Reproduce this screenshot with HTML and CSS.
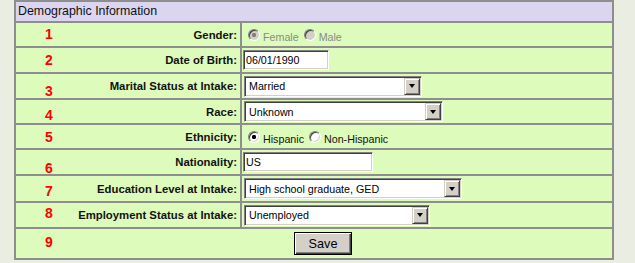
FILE: index.html
```html
<!DOCTYPE html>
<html>
<head>
<meta charset="utf-8">
<title>Demographic Information</title>
<link rel="stylesheet" href="styles.css">
</head>
<body>
<div class="form">
  <div class="hdr">Demographic Information</div>

  <div class="row h23">
    <div class="lbl">Gender:</div>
    <div class="fld">
      <label class="opt off"><input type="radio" name="gender" checked disabled><span>Female</span></label>
      <label class="opt off"><input type="radio" name="gender" disabled><span>Male</span></label>
    </div>
    <span class="num n1">1</span>
  </div>

  <div class="row h24">
    <div class="lbl">Date of Birth:</div>
    <div class="fld"><input class="txt w-dob" type="text" value="06/01/1990"></div>
    <span class="num n2">2</span>
  </div>

  <div class="row h24">
    <div class="lbl">Marital Status at Intake:</div>
    <div class="fld">
      <span class="sel w-marital"><select><option>Married</option></select><span class="arr"><i></i></span></span>
    </div>
    <span class="num n3">3</span>
  </div>

  <div class="row h23">
    <div class="lbl">Race:</div>
    <div class="fld">
      <span class="sel w-race"><select><option>Unknown</option></select><span class="arr"><i></i></span></span>
    </div>
    <span class="num n4">4</span>
  </div>

  <div class="row h23">
    <div class="lbl">Ethnicity:</div>
    <div class="fld">
      <label class="opt"><input type="radio" name="eth" checked><span>Hispanic</span></label>
      <label class="opt"><input type="radio" name="eth"><span>Non-Hispanic</span></label>
    </div>
    <span class="num n5">5</span>
  </div>

  <div class="row h24">
    <div class="lbl">Nationality:</div>
    <div class="fld"><input class="txt w-nat" type="text" value="US"></div>
    <span class="num n6">6</span>
  </div>

  <div class="row h25">
    <div class="lbl">Education Level at Intake:</div>
    <div class="fld">
      <span class="sel w-edu"><select><option>High school graduate, GED</option></select><span class="arr"><i></i></span></span>
    </div>
    <span class="num n7">7</span>
  </div>

  <div class="row h24">
    <div class="lbl">Employment Status at Intake:</div>
    <div class="fld">
      <span class="sel w-emp"><select><option>Unemployed</option></select><span class="arr"><i></i></span></span>
    </div>
    <span class="num n8">8</span>
  </div>

  <div class="row last h29">
    <div class="act"><button type="button" class="btn">Save</button></div>
    <span class="num n9">9</span>
  </div>
</div>
</body>
</html>
```

FILE: styles.css
```css
html, body {
  margin: 0;
  padding: 0;
  background: #eaeee2;
}

body {
  font-family: "Liberation Sans", Arial, sans-serif;
  color: #111;
}

.form {
  margin-left: 14px;
  width: 596px;
  border: 2px solid #8e8e8e;
  background: #ddfbbb;
}

.hdr {
  height: 19px;
  background: #dcd5ef;
  font-size: 12.4px;
  line-height: 19px;
  padding-left: 2px;
  color: #111;
}

.row {
  position: relative;
  display: grid;
  grid-template-columns: 226px 1fr;
  border-top: 2px solid #8e8e8e;
}

.h23 { height: 23px; }
.h24 { height: 24px; }
.h25 { height: 25px; }
.h29 { height: 29px; }

.lbl {
  display: flex;
  align-items: center;
  justify-content: flex-end;
  border-right: 2px solid #8e8e8e;
  padding-right: 3px;
  font-weight: bold;
  font-size: 11.35px;
  color: #111;
}

.fld {
  display: flex;
  align-items: center;
  padding-left: 1px;
}

.row.last {
  grid-template-columns: 1fr;
}

.act {
  display: flex;
  align-items: center;
  justify-content: center;
  padding-left: 18px;
}

.num {
  position: absolute;
  left: 25px;
  width: 16px;
  text-align: center;
  font-weight: bold;
  font-size: 14px;
  line-height: 14px;
  color: #ff0000;
}
.n1 { top: 4px; }
.n2 { top: 5px; }
.n3 { top: 10px; }
.n4 { top: 8px; }
.n5 { top: 5px; }
.n6 { top: 11px; }
.n7 { top: 8px; }
.n8 { top: 3px; }
.n9 { top: 6px; }

/* radios */
.opt {
  display: flex;
  align-items: center;
  font-size: 10.7px;
  color: #111;
}
.opt span {
  margin-top: 5px;
}
.opt input {
  appearance: none;
  -webkit-appearance: none;
  box-sizing: border-box;
  width: 12px;
  height: 12px;
  margin: 0 3px 0 5px;
  border-radius: 50%;
  border: 1px solid;
  border-color: #808080 #ffffff #ffffff #808080;
  box-shadow: inset 1px 1px #404040, inset -1px -1px #d4d0c8;
  background: #ffffff;
}
.opt input:checked {
  background: radial-gradient(circle at center, #000 0 1.9px, #fff 2.4px);
}
.opt.off {
  color: #8a8a8a;
}
.opt.off input {
  background: #d4d0c8;
}
.opt.off input:checked {
  background: radial-gradient(circle at center, #808080 0 1.9px, #d4d0c8 2.4px);
}

/* text inputs */
.txt {
  box-sizing: border-box;
  height: 20px;
  margin: 0;
  padding: 0 2px;
  border: 1px solid;
  border-color: #808080 #ffffff #ffffff #808080;
  box-shadow: inset 1px 1px #404040, inset -1px -1px #d4d0c8;
  background: #fff;
  font-family: "Liberation Sans", Arial, sans-serif;
  font-size: 10.7px;
  color: #000;
  outline: none;
}
.w-dob { width: 86px; }
.w-nat { width: 130px; }

/* selects */
.sel {
  position: relative;
  display: inline-flex;
  box-sizing: border-box;
  height: 21px;
  margin-left: 1px;
  padding: 1px;
  border: 1px solid;
  border-color: #808080 #ffffff #ffffff #808080;
  box-shadow: inset 1px 1px #404040, inset -1px -1px #d4d0c8;
  background: #fff;
}
.sel select {
  appearance: none;
  -webkit-appearance: none;
  width: 100%;
  height: 17px;
  margin: 0;
  border: 0;
  padding: 0 0 0 3px;
  background: #fff;
  font-family: "Liberation Sans", Arial, sans-serif;
  font-size: 10.7px;
  color: #000;
  outline: none;
}
.arr {
  position: absolute;
  right: 1px;
  top: 1px;
  box-sizing: border-box;
  width: 16px;
  height: 17px;
  display: flex;
  align-items: center;
  justify-content: center;
  background: #d4d0c8;
  border: 1px solid;
  border-color: #d4d0c8 #404040 #404040 #d4d0c8;
  box-shadow: inset 1px 1px #ffffff, inset -1px -1px #808080;
}
.arr i {
  display: block;
  width: 0;
  height: 0;
  border-style: solid;
  border-width: 4px 3.5px 0 3.5px;
  border-color: #000 transparent transparent transparent;
}
.w-marital { width: 178px; }
.w-race { width: 199px; }
.w-edu { width: 218px; }
.w-emp { width: 186px; }

/* button */
.btn {
  box-sizing: border-box;
  width: 58px;
  height: 23px;
  margin: 0;
  padding: 0;
  border: 1px solid #000;
  box-shadow: inset 1px 1px #ffffff, inset -1px -1px #404040, inset -2px -2px #808080;
  background: #d4d0c8;
  font-family: "Liberation Sans", Arial, sans-serif;
  font-size: 12.7px;
  color: #000;
}
```
